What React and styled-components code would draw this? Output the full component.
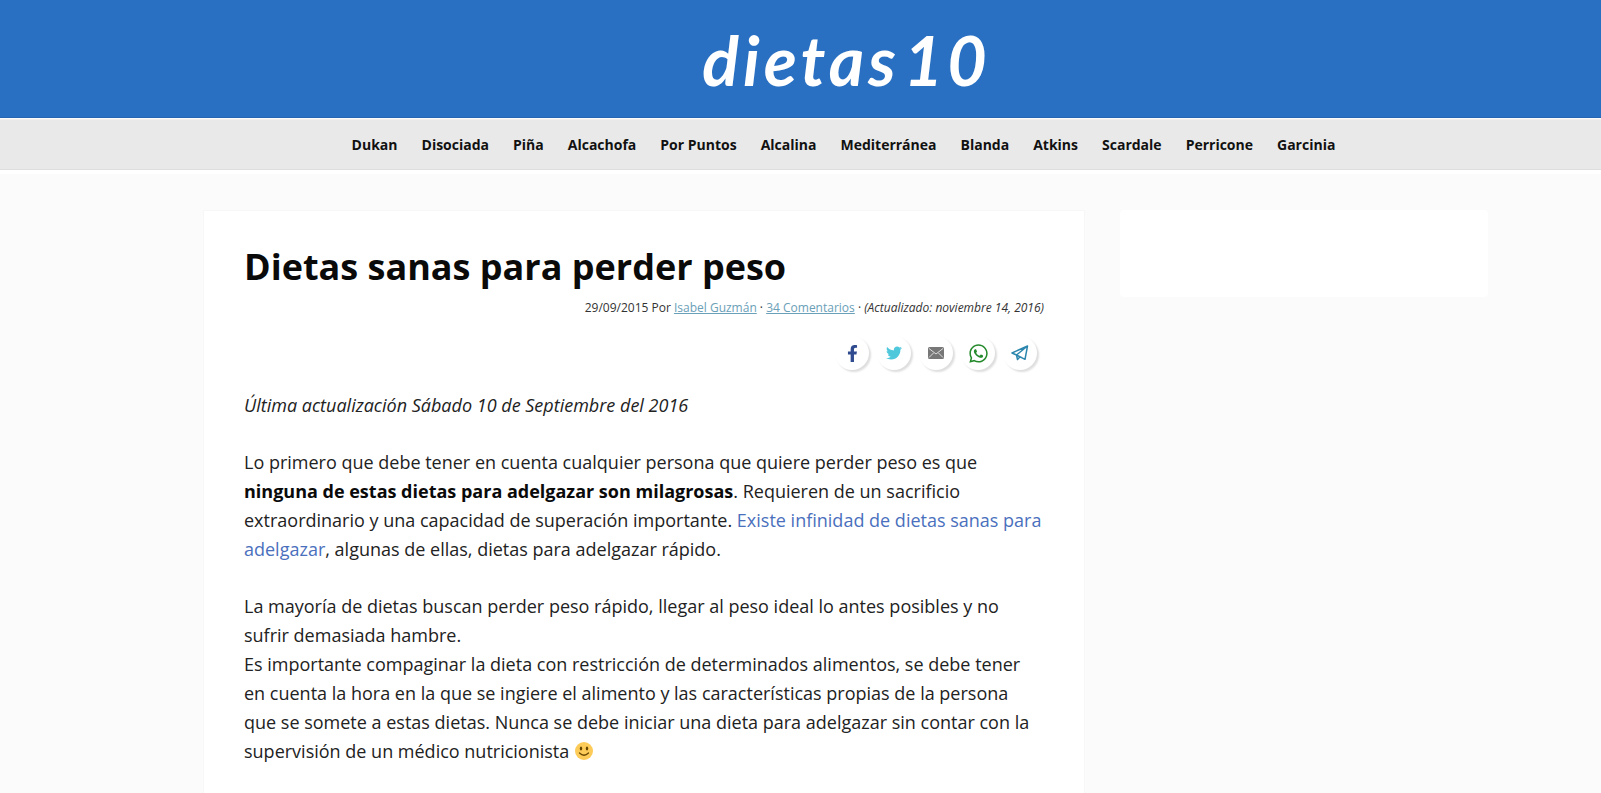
import React from "react";
import styled, { createGlobalStyle } from "styled-components";
import { FaFacebookF, FaTwitter, FaWhatsapp } from "react-icons/fa";

const GlobalStyle = createGlobalStyle`
  *, *::before, *::after { box-sizing: border-box; }
  body {
    margin: 0;
    background: #fbfbfb;
    color: #222;
    font-family: "Open Sans", sans-serif;
    font-size: 18px;
    line-height: 29px;
  }
`;

const Page = styled.div`
  display: flex;
  flex-direction: column;
  min-height: 100vh;
`;

const Header = styled.header`
  display: flex;
  justify-content: center;
  padding: 15px 0 13px 92px;
  background: #2970c2;
  border-bottom: 1px solid #2566b0;
`;

const Logo = styled.a`
  color: #fff;
  font-family: Lato, sans-serif;
  font-size: 68px;
  font-style: italic;
  font-weight: 700;
  letter-spacing: 4px;
  line-height: 89px;
  text-decoration: none;
`;

const LogoNumber = styled.span`
  margin-left: 4px;
`;

const Nav = styled.nav`
  padding-left: 86px;
  margin-top: 1px;
  background: #e9e9e9;
  border-top: 1px solid #f3efec;
  border-bottom: 1px solid #dedede;
  box-shadow: 0 4px 0 #fff;
`;

const Menu = styled.ul`
  display: flex;
  flex-wrap: wrap;
  justify-content: center;
  gap: 0 24px;
  margin: 0;
  padding: 10px 0;
  list-style: none;
  font-size: 14px;
`;

const MenuLink = styled.a`
  color: #111;
  font-weight: 700;
  text-decoration: none;
`;

const Content = styled.div`
  display: flex;
  flex: 1;
  padding: 40px 0 0 90px;
`;

const Columns = styled.div`
  display: grid;
  grid-template-columns: minmax(0, 1fr) 368px;
  gap: 35px;
  width: 100%;
  max-width: 1285px;
  margin: 0 auto;
`;

const Article = styled.article`
  padding: 32px 40px 20px;
  background: #fff;
  border: 1px solid #f7f7f7;
  border-bottom: 0;
`;

const Title = styled.h1`
  margin: 0;
  color: #0a0a0a;
  font-size: 36px;
  font-weight: 700;
  line-height: 48px;
`;

const Meta = styled.p`
  margin: 7px 0 0;
  color: #333;
  font-size: 12px;
  line-height: 20px;
  text-align: right;
`;

const MetaLink = styled.a`
  color: #6aa0b8;
  text-decoration: underline;
`;

const ShareList = styled.ul`
  display: flex;
  justify-content: flex-end;
  gap: 8px;
  margin: 18px 0 0;
  padding: 0 7px;
  list-style: none;
`;

const ShareLink = styled.a`
  display: flex;
  align-items: center;
  justify-content: center;
  width: 34px;
  height: 34px;
  border-radius: 50%;
  background: #fff;
  box-shadow: 2px 2px 2px #dedede;
  color: ${({ $color }) => $color};
  font-size: ${({ $size }) => $size || 16}px;
`;

const Body = styled.div`
  display: flex;
  flex-direction: column;
  gap: 28px;
  margin-top: 21px;

  p { margin: 0; }
  strong { color: #0a0a0a; }
`;

const TextLink = styled.a`
  color: #4a70bd;
  text-decoration: none;
`;

const SmileIcon = styled.svg`
  width: 18px;
  height: 18px;
  margin: 0 1px;
  vertical-align: -2px;
`;

const Widget = styled.aside`
  height: 87px;
  background: #fff;
  border-radius: 4px;
`;

const menu = [
  "Dukan", "Disociada", "Piña", "Alcachofa", "Por Puntos", "Alcalina",
  "Mediterránea", "Blanda", "Atkins", "Scardale", "Perricone", "Garcinia",
];

const MailIcon = () => (
  <svg width="16" height="12" viewBox="0 0 16 12" aria-hidden="true">
    <rect width="16" height="12" rx="1.5" fill="#777" />
    <path d="M1 1.500 8 7l7-5.500M1 10.500 5.500 6M15 10.500 10.500 6" fill="none" stroke="#ddd" />
  </svg>
);

const TelegramIcon = () => (
  <svg width="18" height="16" viewBox="0 0 18 16" fill="none" stroke="currentColor" strokeWidth="1.500" strokeLinejoin="round" aria-hidden="true">
    <path d="M16.500 1 1 8l4.500 2L14 14.300ZM16.500 1 5.500 10l1 4.500 2.500-2.800" />
  </svg>
);

const shares = [
  { name: "Facebook", color: "#2f4a8f", size: 17, Icon: FaFacebookF },
  { name: "Twitter", color: "#4fc8dc", Icon: FaTwitter },
  { name: "Correo", color: "#777", Icon: MailIcon },
  { name: "WhatsApp", color: "#258a2c", size: 21, Icon: FaWhatsapp },
  { name: "Telegram", color: "#2c86ad", Icon: TelegramIcon },
];

const Smile = () => (
  <SmileIcon viewBox="0 0 18 18" role="img" aria-label="Sonrisa">
    <circle cx="9" cy="9" r="9" fill="#fdcb58" />
    <ellipse cx="6" cy="6.500" rx="1.200" ry="2" fill="#664500" />
    <ellipse cx="12" cy="6.500" rx="1.200" ry="2" fill="#664500" />
    <path d="M4.500 11Q9 15.500 13.500 11" fill="none" stroke="#664500" strokeWidth="1.200" strokeLinecap="round" />
  </SmileIcon>
);

export default function App() {
  return (
    <Page>
      <GlobalStyle />
      <Header>
        <Logo href="#">dietas<LogoNumber>10</LogoNumber></Logo>
      </Header>
      <Nav>
        <Menu>
          {menu.map((label) => (
            <li key={label}><MenuLink href="#">{label}</MenuLink></li>
          ))}
        </Menu>
      </Nav>
      <Content>
        <Columns>
          <Article>
            <Title>Dietas sanas para perder peso</Title>
            <Meta>
              29/09/2015 Por <MetaLink href="#">Isabel Guzmán</MetaLink> ·{" "}
              <MetaLink href="#">34 Comentarios</MetaLink> · <em>(Actualizado: noviembre 14, 2016)</em>
            </Meta>
            <ShareList>
              {shares.map(({ name, color, size, Icon }) => (
                <li key={name}>
                  <ShareLink href="#" aria-label={name} $color={color} $size={size}><Icon /></ShareLink>
                </li>
              ))}
            </ShareList>
            <Body>
              <p><em>Última actualización Sábado 10 de Septiembre del 2016</em></p>
              <p>
                Lo primero que debe tener en cuenta cualquier persona que quiere perder peso es que{" "}
                <strong>ninguna de estas dietas para adelgazar son milagrosas</strong>. Requieren de un
                sacrificio extraordinario y una capacidad de superación importante.{" "}
                <TextLink href="#">Existe infinidad de dietas sanas para adelgazar</TextLink>, algunas de
                ellas, dietas para adelgazar rápido.
              </p>
              <p>
                La mayoría de dietas buscan perder peso rápido, llegar al peso ideal lo antes posibles y no
                sufrir demasiada hambre.
                <br />
                Es importante compaginar la dieta con restricción de determinados alimentos, se debe tener
                en cuenta la hora en la que se ingiere el alimento y las características propias de la
                persona que se somete a estas dietas. Nunca se debe iniciar una dieta para adelgazar sin
                contar con la supervisión de un médico nutricionista <Smile />
              </p>
            </Body>
          </Article>
          <Widget aria-label="Barra lateral" />
        </Columns>
      </Content>
    </Page>
  );
}
